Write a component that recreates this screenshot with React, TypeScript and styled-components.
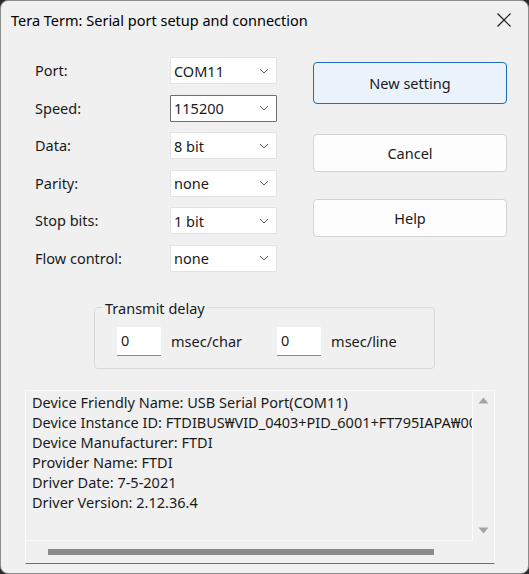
import React from "react";
import styled, { createGlobalStyle } from "styled-components";

const Global = createGlobalStyle`
  html, body { margin: 0; padding: 0; background: #2a2a2a; }
  body { font-family: "Noto Sans", "Open Sans", sans-serif; }
  * { box-sizing: border-box; }
`;

const Window = styled.div`
  width: 529px;
  height: 574px;
  background: #f0f0f0;
  border: 1px solid #8c8c8c;
  border-radius: 8px;
  overflow: hidden;
  display: flex;
  flex-direction: column;
  color: #1a1a1a;
  font-size: 14.5px;
`;

const TitleBar = styled.div`
  height: 38px;
  flex: none;
  display: flex;
  align-items: center;
  justify-content: space-between;
  padding: 0 14px 0 10px;
  font-size: 14.5px;
  color: #000;
`;

const CloseBtn = styled.div`
  width: 20px;
  height: 20px;
  display: flex;
  align-items: center;
  justify-content: center;
`;

const Body = styled.div`
  display: flex;
  flex: none;
  padding: 18px 0 0 34px;
`;

const Form = styled.div`
  display: grid;
  grid-template-columns: 135px 107px;
  grid-auto-rows: 27px;
  row-gap: 10.5px;
  align-items: center;
`;

const Label = styled.div`
  line-height: 27px;
`;

const Combo = styled.div<{ $focused?: boolean }>`
  height: 27px;
  background: #fff;
  border: 1px solid ${(p) => (p.$focused ? "#6f6f6f" : "#e2e2e2")};
  border-radius: 1px;
  display: flex;
  align-items: center;
  justify-content: space-between;
  padding: 0 7px 0 3px;
`;

const Buttons = styled.div`
  margin-left: 36px;
  margin-top: 5px;
  display: flex;
  flex-direction: column;
  width: 194px;
`;

const Button = styled.div<{ $primary?: boolean; $h: number; $mt: number }>`
  height: ${(p) => p.$h}px;
  margin-top: ${(p) => p.$mt}px;
  border-radius: 4px;
  border: 1px solid ${(p) => (p.$primary ? "#1a6fb8" : "#d2d2d2")};
  background: ${(p) => (p.$primary ? "#eaf3fc" : "#fdfdfd")};
  display: flex;
  align-items: center;
  justify-content: center;
`;

const GroupBox = styled.fieldset`
  flex: none;
  margin: 28px 0 0 93px;
  width: 341px;
  height: 69px;
  border: 1px solid #dadada;
  border-radius: 4px;
  padding: 0 0 0 22px;
  display: flex;
  align-items: flex-start;
`;

const Legend = styled.legend`
  padding: 0 2px;
  margin-left: -14px;
  line-height: 16px;
`;

const DelayItem = styled.div<{ $gap: number }>`
  display: flex;
  align-items: center;
  gap: 10px;
  margin-top: 11px;
  margin-right: ${(p) => p.$gap}px;
`;

const NumBox = styled.div`
  width: 44px;
  height: 29px;
  background: #fff;
  border-bottom: 1px solid #8a8a8a;
  padding: 3px 0 0 4px;
`;

const InfoPanel = styled.div`
  flex: none;
  margin: 21px 0 0 24px;
  width: 470px;
  height: 174px;
  border: 1px solid #fbfbfb;
  border-bottom-color: #6d6d6d;
  display: grid;
  grid-template-columns: 1fr 21px;
  grid-template-rows: 1fr 22px;
`;

const InfoText = styled.div`
  overflow: hidden;
  white-space: nowrap;
  padding: 1px 0 0 6px;
  line-height: 20px;
  border-right: 1px solid #fbfbfb;
  border-bottom: 1px solid #fbfbfb;
`;

const VScroll = styled.div`
  display: flex;
  flex-direction: column;
  justify-content: space-between;
  align-items: center;
  padding: 6px 0 7px;
`;

const HScroll = styled.div`
  display: flex;
  align-items: center;
  padding-left: 22px;
`;

const Thumb = styled.div`
  width: 386px;
  height: 6px;
  background: #8a8a8a;
`;

const Chevron = () => (
  <svg width="10" height="6" viewBox="0 0 10 6">
    <path d="M1 1 L5 5 L9 1" fill="none" stroke="#5f5f5f" strokeWidth="1" />
  </svg>
);

const Tri = ({ up }: { up?: boolean }) => (
  <svg width="11" height="7" viewBox="0 0 11 7">
    <path d={up ? "M0.5 6.5 L5.5 0.5 L10.5 6.5 Z" : "M0.5 0.5 L5.5 6.5 L10.5 0.5 Z"} fill="#a3a3a3" />
  </svg>
);

const rows: [string, string, boolean?][] = [
  ["Port:", "COM11"],
  ["Speed:", "115200", true],
  ["Data:", "8 bit"],
  ["Parity:", "none"],
  ["Stop bits:", "1 bit"],
  ["Flow control:", "none"],
];

const info = [
  "Device Friendly Name: USB Serial Port(COM11)",
  "Device Instance ID: FTDIBUS₩VID_0403+PID_6001+FT795IAPA₩0000",
  "Device Manufacturer: FTDI",
  "Provider Name: FTDI",
  "Driver Date: 7-5-2021",
  "Driver Version: 2.12.36.4",
];

export default function App() {
  return (
    <>
      <Global />
      <Window>
        <TitleBar>
          <span>Tera Term: Serial port setup and connection</span>
          <CloseBtn>
            <svg width="16" height="16" viewBox="0 0 16 16">
              <path d="M1.5 1.5 L14.5 14.5 M14.5 1.5 L1.5 14.5" stroke="#1a1a1a" strokeWidth="1.2" />
            </svg>
          </CloseBtn>
        </TitleBar>
        <Body>
          <Form>
            {rows.map(([l, v, f]) => (
              <React.Fragment key={l}>
                <Label>{l}</Label>
                <Combo $focused={f}>
                  <span>{v}</span>
                  <Chevron />
                </Combo>
              </React.Fragment>
            ))}
          </Form>
          <Buttons>
            <Button $primary $h={42} $mt={0}>New setting</Button>
            <Button $h={38} $mt={30}>Cancel</Button>
            <Button $h={38} $mt={27}>Help</Button>
          </Buttons>
        </Body>
        <GroupBox>
          <Legend>Transmit delay</Legend>
          <DelayItem $gap={35}>
            <NumBox>0</NumBox>
            <span>msec/char</span>
          </DelayItem>
          <DelayItem $gap={0}>
            <NumBox>0</NumBox>
            <span>msec/line</span>
          </DelayItem>
        </GroupBox>
        <InfoPanel>
          <InfoText>
            {info.map((t) => (
              <div key={t}>{t}</div>
            ))}
          </InfoText>
          <VScroll>
            <Tri up />
            <Tri />
          </VScroll>
          <HScroll>
            <Thumb />
          </HScroll>
          <div />
        </InfoPanel>
      </Window>
    </>
  );
}
